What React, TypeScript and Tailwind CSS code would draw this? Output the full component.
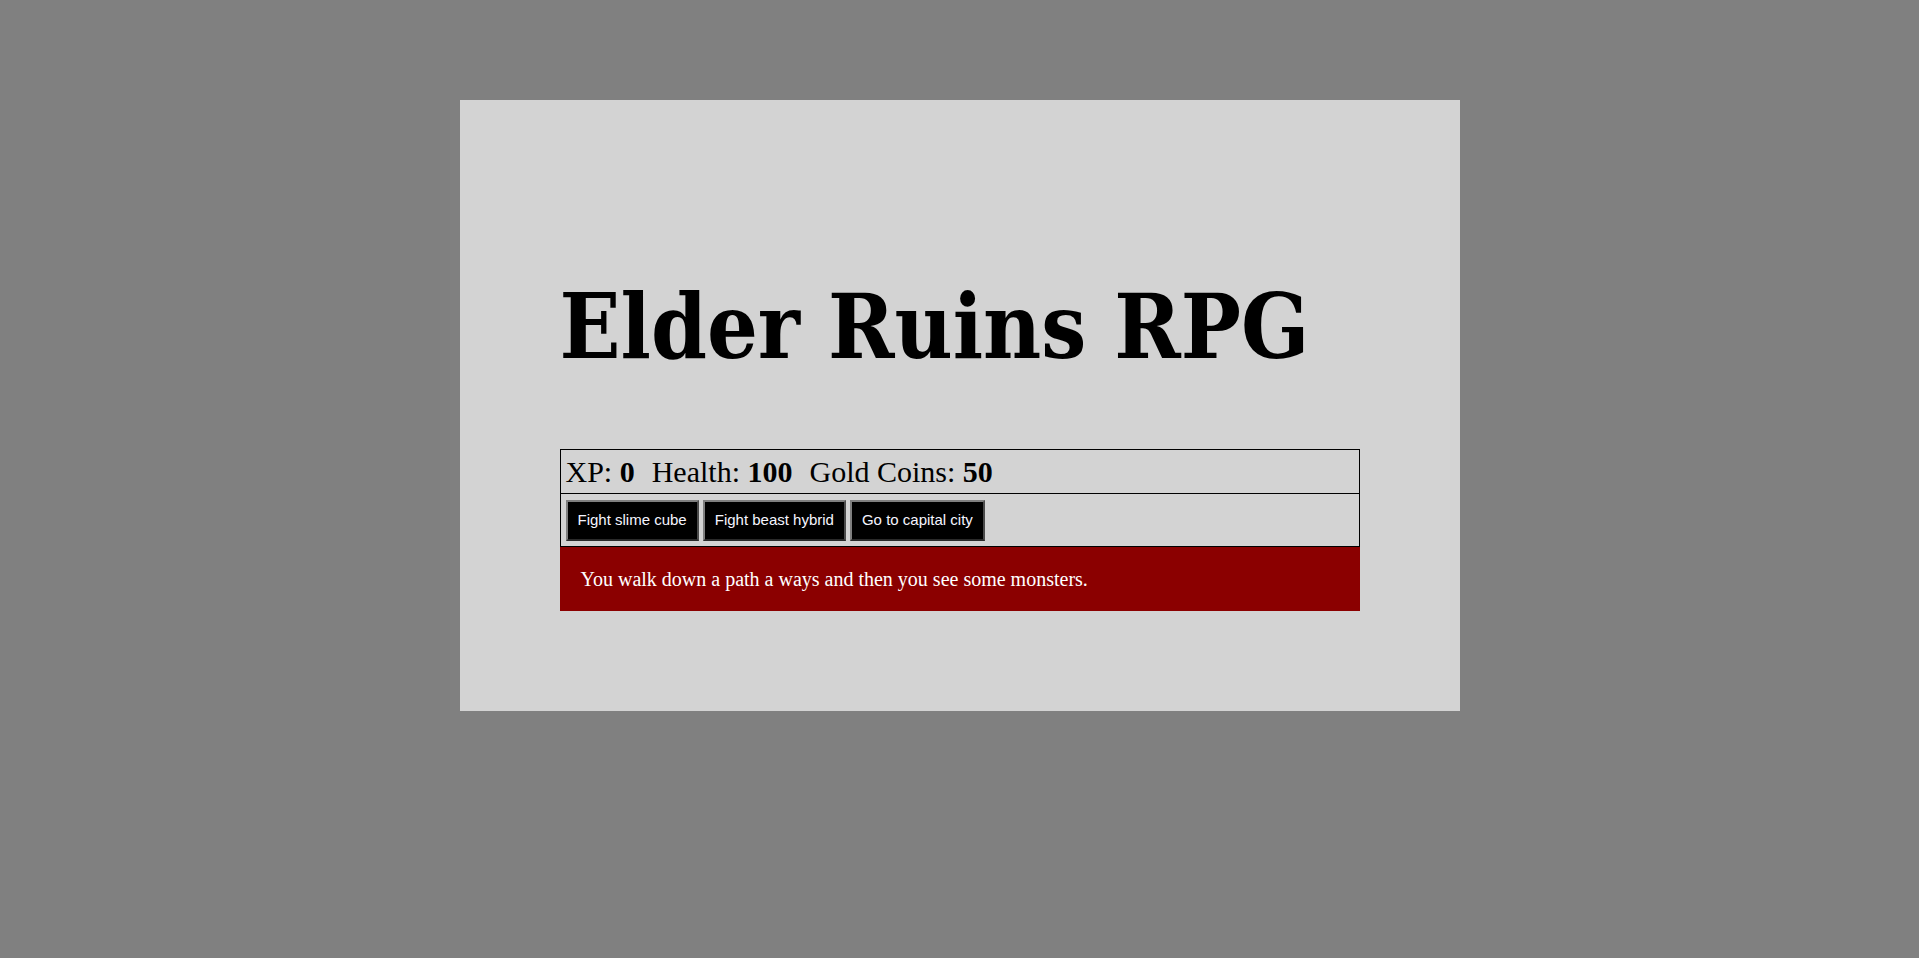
export default function App() {
  const buttons = ["Fight slime cube", "Fight beast hybrid", "Go to capital city"];

  return (
    <div className="min-h-[958px] bg-[#808080] pt-[100px]">
      <div className="mx-auto w-[1000px] bg-[#d3d3d3] px-[100px] pb-[100px] pt-[175px]">
        <h1 className="mb-[70px] font-['DejaVu_Serif_Condensed','DejaVu_Serif',serif] text-[89px] leading-[1.164] font-bold font-stretch-condensed text-black">
          Elder Ruins RPG
        </h1>

        <div className="border border-black px-[5px] py-[5px] font-['Liberation_Serif',serif] text-[30px] leading-[33px] text-black">
          <span className="mr-[17px]">
            XP: <strong>0</strong>
          </span>
          <span className="mr-[17px]">
            Health: <strong>100</strong>
          </span>
          <span>
            Gold Coins: <strong>50</strong>
          </span>
        </div>

        <div className="flex gap-[4px] border border-t-0 border-black px-[5px] pb-[5px] pt-[6px]">
          {buttons.map((b) => (
            <button
              key={b}
              className="h-[41px] border-2 border-t-[#7f7f7f] border-l-[#7f7f7f] border-r-[#4a4a4a] border-b-[#2a2a2a] bg-black px-[10px] font-['Liberation_Sans',sans-serif] text-[15px] text-[#f5f5ff]"
            >
              {b}
            </button>
          ))}
        </div>

        <div className="flex h-[64px] items-center bg-[#8b0000] pl-[21px] font-['Liberation_Serif',serif] text-[20px] text-white">
          You walk down a path a ways and then you see some monsters.
        </div>
      </div>
    </div>
  );
}
